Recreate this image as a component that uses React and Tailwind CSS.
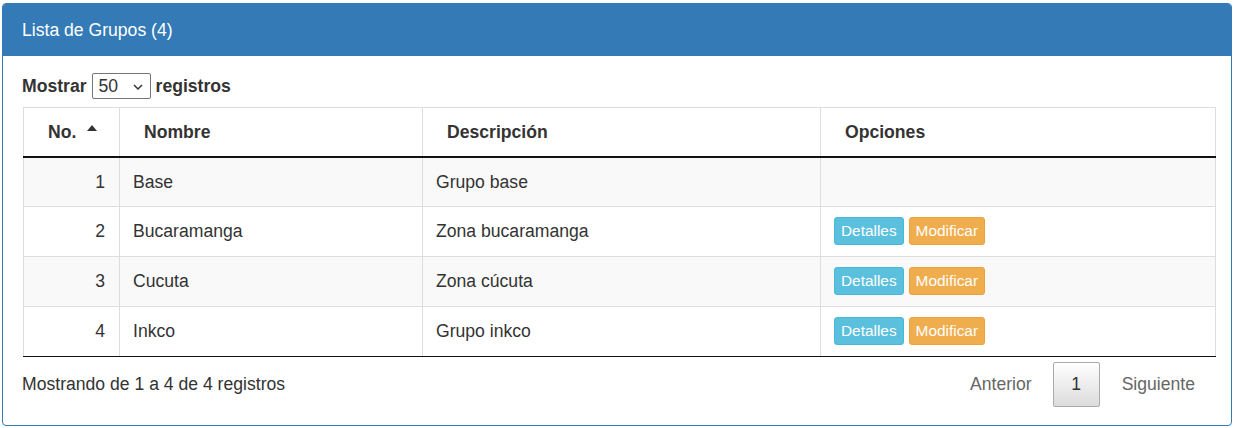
import React from 'react';

const grupos = [
  { no: 1, nombre: 'Base', desc: 'Grupo base', opciones: false },
  { no: 2, nombre: 'Bucaramanga', desc: 'Zona bucaramanga', opciones: true },
  { no: 3, nombre: 'Cucuta', desc: 'Zona cúcuta', opciones: true },
  { no: 4, nombre: 'Inkco', desc: 'Grupo inkco', opciones: true },
];

const App = () => {
  return (
    <div className="min-h-screen bg-white pt-[3px] pl-[2px] text-[#333] font-['Liberation_Sans',Arial,sans-serif]">
      <div className="w-[1230px] h-[423px] border border-[#337ab7] rounded-[4px] overflow-hidden">
        {/* Heading */}
        <div className="h-[52px] bg-[#337ab7] text-white text-[17.6px] flex items-center pl-[19px]">
          Lista de Grupos (4)
        </div>

        {/* Body */}
        <div className="pl-[20px] pt-[17px]">
          <div className="flex items-center h-[26px] text-[17.6px] font-bold">
            <span className="ml-[-1px]">Mostrar</span>
            <div className="ml-[5px] w-[59px] h-[26px] border border-[#767676] rounded-[2px] flex items-center justify-between pl-[6px] pr-[6px] font-normal">
              <span>50</span>
              <svg width="12" height="12" viewBox="0 0 12 12" className="mt-[1px]">
                <path d="M2 4 L6 8 L10 4" fill="none" stroke="#333" strokeWidth="1.5" />
              </svg>
            </div>
            <span className="ml-[5px]">registros</span>
          </div>

          <table className="mt-[8px] w-[1192px] border-collapse text-[17.6px] table-fixed">
            <colgroup>
              <col className="w-[96px]" />
              <col className="w-[303px]" />
              <col className="w-[398px]" />
              <col className="w-[395px]" />
            </colgroup>
            <thead>
              <tr className="h-[49px]">
                <th className="border border-[#ddd] border-b-2 border-b-[#111] text-left font-bold pl-[24px]">
                  <span className="inline-flex items-center gap-[11px]">
                    No.
                    <svg width="10" height="6" viewBox="0 0 10 6" className="mb-[8px]">
                      <path d="M0 6 L5 0 L10 6 Z" fill="#333" />
                    </svg>
                  </span>
                </th>
                <th className="border border-[#ddd] border-b-2 border-b-[#111] text-left font-bold pl-[24px]">Nombre</th>
                <th className="border border-[#ddd] border-b-2 border-b-[#111] text-left font-bold pl-[24px]">Descripción</th>
                <th className="border border-[#ddd] border-b-2 border-b-[#111] text-left font-bold pl-[24px]">Opciones</th>
              </tr>
            </thead>
            <tbody>
              {grupos.map((g, i) => (
                <tr key={g.no} className={`h-[50px] ${i % 2 === 0 ? 'bg-[#f9f9f9]' : 'bg-white'}`}>
                  <td className={`border border-[#ddd] text-right pr-[14px] ${i === 3 ? 'border-b-[#111]' : ''}`}>{g.no}</td>
                  <td className={`border border-[#ddd] pl-[13px] ${i === 3 ? 'border-b-[#111]' : ''}`}>{g.nombre}</td>
                  <td className={`border border-[#ddd] pl-[13px] ${i === 3 ? 'border-b-[#111]' : ''}`}>{g.desc}</td>
                  <td className={`border border-[#ddd] pl-[13px] ${i === 3 ? 'border-b-[#111]' : ''}`}>
                    {g.opciones && (
                      <div className="flex gap-[5px] mt-[-1px]">
                        <span className="h-[28px] px-[6px] flex items-center rounded-[3px] bg-[#5bc0de] border border-[#46b8da] text-white text-[15.4px]">
                          Detalles
                        </span>
                        <span className="h-[28px] px-[6px] flex items-center rounded-[3px] bg-[#f0ad4e] border border-[#eea236] text-white text-[15.4px]">
                          Modificar
                        </span>
                      </div>
                    )}
                  </td>
                </tr>
              ))}
            </tbody>
          </table>

          <div className="w-[1192px] flex items-center justify-between mt-[5px] text-[17.6px]">
            <span className="ml-[-1px]">Mostrando de 1 a 4 de 4 registros</span>
            <div className="flex items-center text-[#666] mr-[20px]">
              <span className="mr-[21px]">Anterior</span>
              <span className="w-[47px] h-[45px] flex items-center justify-center border border-[#aaa] rounded-[2px] bg-gradient-to-b from-white to-[#dcdcdc] text-[#333]">
                1
              </span>
              <span className="ml-[22px]">Siguiente</span>
            </div>
          </div>
        </div>
      </div>
    </div>
  );
};

export default App;
